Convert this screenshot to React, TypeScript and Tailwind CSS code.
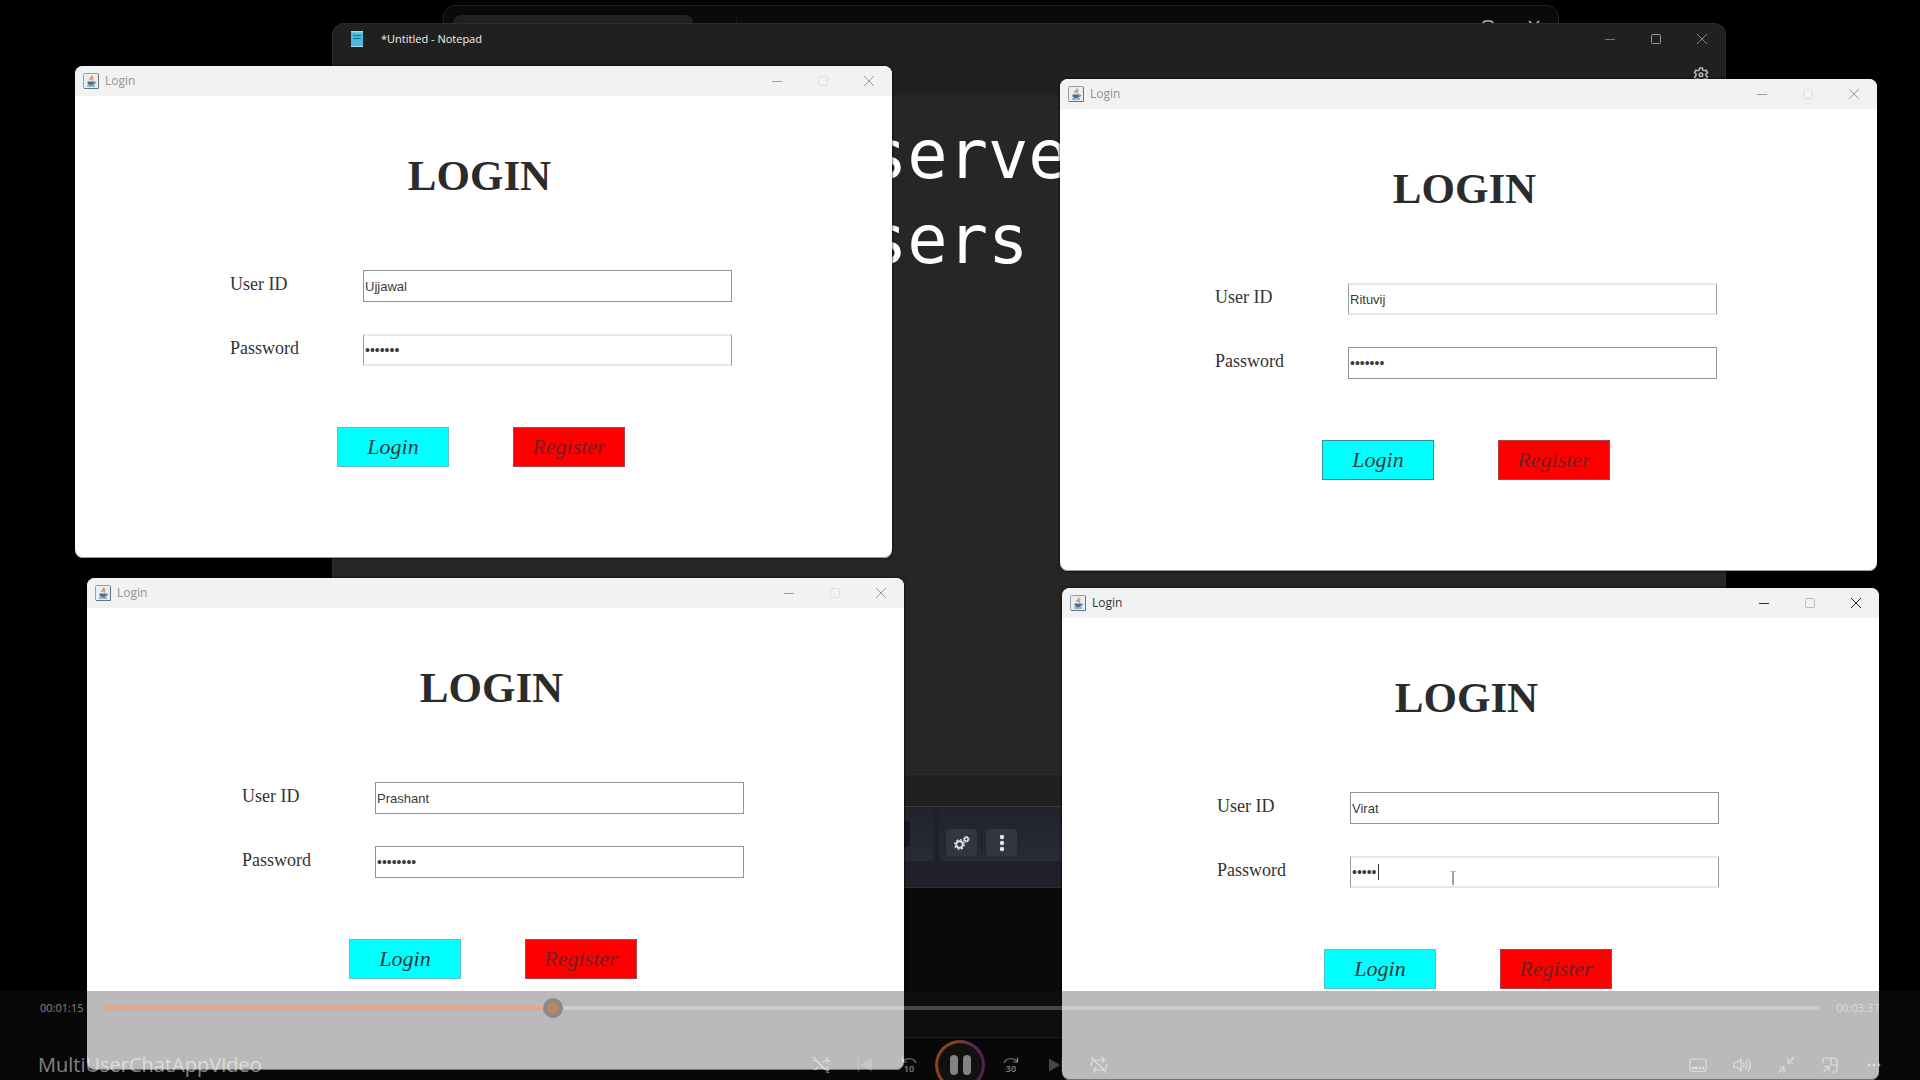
import React from "react";

type Tone = "solid" | "faint";

interface LoginWindowProps {
  id: string;
  place: string;
  user: string;
  password: string;
  active?: boolean;
  userTone?: Tone;
  passwordTone?: Tone;
  buttonBorder?: string;
  caret?: boolean;
}

const toneClass: Record<Tone, string> = {
  solid: "border-[#8c959c]",
  faint: "border-y-2 border-x-[#949ca3] border-y-[#e6e8ea]",
};

function MinimizeIcon() {
  return (
    <svg className="h-3 w-3" viewBox="0 0 12 12" fill="none" stroke="currentColor">
      <path d="M1 6.5h10" />
    </svg>
  );
}

function MaximizeIcon() {
  return (
    <svg className="h-3 w-3" viewBox="0 0 12 12" fill="none" stroke="currentColor">
      <rect x="1.5" y="1.5" width="9" height="9" rx="1" />
    </svg>
  );
}

function CloseIcon() {
  return (
    <svg className="h-3 w-3" viewBox="0 0 12 12" fill="none" stroke="currentColor">
      <path d="M1 1l10 10M11 1L1 11" />
    </svg>
  );
}

function JavaIcon() {
  return (
    <svg className="h-4 w-4" viewBox="0 0 16 16" fill="none">
      <rect x="0.5" y="0.5" width="15" height="15" rx="1" fill="#e9eef1" stroke="#8da0b0" />
      <path d="M1 15.5h14.5V1" stroke="#5d7789" />
      <path d="M9 2.5c.8 1.6-3 2.3-1.900 4.600M10.500 4.500c-2 .7-1.800 1.500-1 3" stroke="#dd7a34" strokeWidth="1.200" />
      <path d="M4.500 8.500h6.500v1.500c0 1.500-1 2-3 2s-3.500-.5-3.500-2z" fill="#4c708c" />
      <path d="M11 9c2.500-.6 2 1.800-.3 2M4 13h8" stroke="#4c708c" />
    </svg>
  );
}

function WindowControls({ closeClass, minClass, maxClass }: { closeClass: string; minClass: string; maxClass: string }) {
  return (
    <div className="ml-auto flex h-full">
      <button aria-label="Minimize" className={`flex w-[46px] items-center justify-center ${minClass}`}>
        <MinimizeIcon />
      </button>
      <button aria-label="Maximize" className={`flex w-[46px] items-center justify-center ${maxClass}`}>
        <MaximizeIcon />
      </button>
      <button aria-label="Close" className={`flex w-[46px] items-center justify-center ${closeClass}`}>
        <CloseIcon />
      </button>
    </div>
  );
}

function LoginWindow({
  id,
  place,
  user,
  password,
  active = false,
  userTone = "solid",
  passwordTone = "solid",
  buttonBorder = "border-[#5fc0c4]",
  caret = false,
}: LoginWindowProps) {
  const field = "h-8 w-full border bg-white pl-px font-['Liberation_Sans',sans-serif] text-[#3a3a3a] outline-none";
  return (
    <section
      className={`absolute w-[817px] overflow-hidden rounded-lg bg-white pb-[91px] shadow-[0_0_3px_#000,inset_0_-1px_0_#999] ${place}`}
    >
      <header className="flex h-[30px] items-center bg-[#f2f2f2] pl-2">
        <JavaIcon />
        <span className={`ml-1.5 font-['Open_Sans',sans-serif] text-xs ${active ? "text-[#333]" : "text-[#929292]"}`}>
          Login
        </span>
        <WindowControls
          minClass={active ? "text-[#333]" : "text-[#9c9c9c]"}
          maxClass={active ? "text-[#bbb]" : "text-[#dedede]"}
          closeClass={active ? "text-[#222]" : "text-[#9c9c9c]"}
        />
      </header>
      <form className="font-['Liberation_Serif',serif]" onSubmit={(e) => e.preventDefault()}>
        <h1 className="mt-14 pr-2 text-center text-[43px] leading-[48px] font-bold text-[#2b2b2b]">LOGIN</h1>
        <div className="mt-[70px] grid grid-cols-[133px_369px] gap-y-8 pl-[155px]">
          <label htmlFor={`${id}-user`} className="text-lg leading-7 text-[#333]">
            User ID
          </label>
          <input id={`${id}-user`} type="text" defaultValue={user} className={`${field} text-[13px] ${toneClass[userTone]}`} />
          <label htmlFor={`${id}-password`} className="text-lg leading-7 text-[#333]">
            Password
          </label>
          <div className="relative">
            <input
              id={`${id}-password`}
              type="password"
              defaultValue={password}
              className={`${field} text-sm ${toneClass[passwordTone]}`}
            />
            {caret && <span className="absolute top-2 left-7 h-4 w-px bg-[#333]" />}
          </div>
        </div>
        <div className="mt-[61px] flex gap-16 pl-[262px]">
          <button type="submit" className={`h-10 w-28 border bg-[#00ffff] pb-0.5 text-[22px] text-[#2b3a3a] italic ${buttonBorder}`}>
            Login
          </button>
          <button type="button" className="h-10 w-28 border border-[#b0404a] bg-[#ff0000] pb-0.5 text-[22px] text-[#6e2020] italic">
            Register
          </button>
        </div>
      </form>
    </section>
  );
}

function RearWindow() {
  return (
    <section className="absolute top-[5px] left-[443px] h-[1033px] w-[1116px] rounded-xl border border-[#222] bg-[#0a0a0a]">
      <div className="flex h-8 items-start pl-[9px]">
        <div className="mt-[9px] h-6 w-60 rounded-t-lg bg-[#212121]" />
        <div className="mt-2 ml-[43px] h-6 w-px bg-[#181818]" />
        <div className="mt-[14px] mr-[18px] ml-auto flex gap-[34px] text-[#bbb]">
          <svg className="h-3 w-3" viewBox="0 0 12 12" fill="none" stroke="currentColor" strokeWidth="1.500">
            <rect x="1" y="1" width="10" height="10" rx="3" />
          </svg>
          <svg className="h-3 w-3" viewBox="0 0 12 12" fill="none" stroke="currentColor" strokeWidth="1.500">
            <path d="M1 1l10 10M11 1L1 11" />
          </svg>
        </div>
      </div>
    </section>
  );
}

function DockedToolbar() {
  return (
    <section className="absolute top-[780px] left-[700px] flex h-[108px] w-[520px] items-start gap-[5px] border-b border-[#2b2c36] bg-[#1f202a] pt-[27px]">
      <div className="flex h-[54px] w-[234px] items-center justify-end rounded-b bg-linear-to-b from-[#212329] to-[#292b35] pr-6">
        <div className="h-[26px] w-12 rounded bg-[#171820]" />
      </div>
      <div className="flex h-[54px] flex-1 items-start gap-1 rounded-b bg-linear-to-b from-[#212329] to-[#292b35] pt-[22px] pl-[7px]">
        <button aria-label="Settings" className="flex h-[27px] w-[31px] items-center justify-center rounded bg-[#333640] text-[#e4e4e4]">
          <svg className="h-4 w-4" viewBox="0 0 16 16" fill="none" stroke="currentColor">
            <circle cx="5.500" cy="9.500" r="3.300" strokeWidth="2" />
            <circle cx="5.500" cy="9.500" r="4.800" strokeWidth="1.400" strokeDasharray="1.900 1.870" />
            <circle cx="12.300" cy="4.300" r="1.800" strokeWidth="1.400" />
            <circle cx="12.300" cy="4.300" r="2.800" strokeWidth="1.100" strokeDasharray="1.300 0.900" />
          </svg>
        </button>
        <div className="mt-1 h-5 w-px bg-[#1c1d25]" />
        <button aria-label="More options" className="flex h-[27px] w-[31px] items-center justify-center rounded bg-[#333640] text-[#e4e4e4]">
          <svg className="h-[18px] w-[18px]" viewBox="0 0 18 18" fill="currentColor">
            <circle cx="9" cy="3" r="2.200" />
            <circle cx="9" cy="9" r="2.200" />
            <circle cx="9" cy="15" r="2.200" />
          </svg>
        </button>
      </div>
    </section>
  );
}

function Notepad() {
  return (
    <section className="absolute top-[23px] left-[332px] flex h-[784px] w-[1394px] flex-col overflow-hidden rounded-t-xl border border-[#2c2c2c] border-b-[#3b3b3b] bg-[#262626]">
      <header className="h-[71px] bg-[#202020]">
        <div className="flex h-[30px] items-center pl-[18px]">
          <svg className="h-4 w-3" viewBox="0 0 12 16">
            <path d="M0 1h12v15H0z" fill="#4bb9d9" />
            <path d="M0 0h12v1.500H0zM0 15h12v1H0z" fill="#a7dcea" />
            <path d="M2 4.500h8M2 7.500h8" stroke="#1d718f" />
          </svg>
          <span className="ml-[18px] font-['Open_Sans',sans-serif] text-[11px] text-[#f2f2f2]">*Untitled - Notepad</span>
          <WindowControls minClass="text-[#777]" maxClass="text-[#999]" closeClass="text-[#888]" />
        </div>
        <div className="flex justify-end pt-[13px] pr-4">
          <svg className="h-4 w-4 text-[#bbb]" viewBox="0 0 16 16" fill="none" stroke="currentColor" strokeWidth="1.500">
            <path d="M6.700 1h2.600l.5 2 1.400.8 2-.6 1.300 2.300-1.500 1.400v1.700l1.500 1.400-1.300 2.300-2-.6-1.400.8-.5 2H6.700l-.5-2-1.400-.8-2 .6-1.300-2.300L3 8.600V6.900L1.500 5.500l1.300-2.300 2 .6L6.200 3z" />
            <circle cx="8" cy="7.800" r="1.800" />
          </svg>
        </div>
      </header>
      <div className="flex-1 pt-[18px] pl-[534px] font-['DejaVu_Sans_Mono',monospace] text-[67px] leading-[85px] text-white">
        <p>serve</p>
        <p>sers</p>
      </div>
      <footer className="h-8 border-t border-[#2b2b2b] bg-[#202020]" />
    </section>
  );
}

function IconButton({ label, children }: { label: string; children: React.ReactNode }) {
  return (
    <button aria-label={label} className="flex h-5 w-5 items-center justify-center">
      <svg className="h-[18px] w-[18px]" viewBox="0 0 18 18" fill="none" stroke="currentColor" strokeWidth="1.200">
        {children}
      </svg>
    </button>
  );
}

function SkipIcon({ amount, flip = false }: { amount: string; flip?: boolean }) {
  return (
    <>
      <path d={flip ? "M2 7C4 1.500 13 1.500 15.500 6M15.500 1.500V6H11" : "M16 7C14 1.500 5 1.500 2.500 6M2.500 1.500V6H7"} />
      <text
        x="9"
        y="16"
        textAnchor="middle"
        fill="currentColor"
        stroke="none"
        className="font-['Open_Sans',sans-serif] text-[9px] font-semibold"
      >
        {amount}
      </text>
    </>
  );
}

function Player() {
  return (
    <section className="absolute inset-x-0 bottom-0 h-[89px] bg-[#1a1a1a]/30 font-['Open_Sans',sans-serif] text-white/50">
      <div className="flex h-[34px] items-center pr-[38px] pl-10 text-[11px]">
        <span className="w-[61px]">00:01:15</span>
        <input
          type="range"
          aria-label="Seek"
          min={0}
          max={1000}
          defaultValue={260}
          className="h-5 flex-1 appearance-none bg-transparent [&::-webkit-slider-runnable-track]:h-1 [&::-webkit-slider-runnable-track]:rounded-full [&::-webkit-slider-runnable-track]:bg-[linear-gradient(to_right,#e9a883_26%,#ffffff3b_26%)] [&::-webkit-slider-thumb]:-mt-2 [&::-webkit-slider-thumb]:h-5 [&::-webkit-slider-thumb]:w-5 [&::-webkit-slider-thumb]:appearance-none [&::-webkit-slider-thumb]:rounded-full [&::-webkit-slider-thumb]:bg-[radial-gradient(circle,#bf845f_5px,#8a8a8a_6px)]"
        />
        <span className="ml-4 w-[46px] text-white/45">00:03:37</span>
      </div>
      <div className="mt-[15px] grid h-[50px] grid-cols-[1fr_auto_1fr] items-center px-[38px]">
        <span className="text-xl leading-6">MultiUserChatAppVideo</span>
        <div className="flex items-center">
          <div className="flex gap-6 pr-4">
            <IconButton label="Shuffle off">
              <path d="M1 4.500h3l8.500 9H17M1 13.500h3l2.500-2.700M10 7l2.500-2.500H17M14 1.500l3 3-3 3M14 10.500l3 3-3 3M1 1l16 16" />
            </IconButton>
            <IconButton label="Previous">
              <path d="M2.500 2v14" opacity="0.400" />
              <path d="M16 2.500v13L5 9z" fill="currentColor" stroke="none" opacity="0.400" />
            </IconButton>
            <IconButton label="Back 10 seconds">
              <SkipIcon amount="10" />
            </IconButton>
          </div>
          <button
            aria-label="Pause"
            className="flex h-[50px] w-[50px] items-center justify-center rounded-full bg-[linear-gradient(90deg,#8a4616,#8a4616_35%,#743040_60%,#4f2058)] p-[3px]"
          >
            <span className="flex h-full w-full items-center justify-center gap-[5px] rounded-full bg-[#111]">
              <span className="h-5 w-2 rounded-sm bg-[#838383]" />
              <span className="h-5 w-2 rounded-sm bg-[#838383]" />
            </span>
          </button>
          <div className="flex gap-6 pl-4">
            <IconButton label="Forward 30 seconds">
              <SkipIcon amount="30" flip />
            </IconButton>
            <IconButton label="Next">
              <path d="M3 2.500v13L14 9z" fill="currentColor" stroke="none" opacity="0.500" />
              <path d="M16 2v14" opacity="0.300" />
            </IconButton>
            <IconButton label="Repeat off">
              <path d="M1.500 10V7.500c0-2 1-3.500 3.500-3.500h9M11.500 1l3 3-3 3M16.500 8v2.500c0 2-1 3.500-3.500 3.500H4M6.500 11l-3 3 3 3M1 1l16 16" />
            </IconButton>
          </div>
        </div>
        <div className="-mr-0.5 flex justify-end gap-6">
          <IconButton label="Subtitles">
            <rect x="1" y="3" width="16" height="12.500" rx="2" />
            <path d="M3 12h6M10 12h2M13 12h2" strokeWidth="2.500" />
          </IconButton>
          <IconButton label="Volume">
            <path d="M1 6.500h3L8 3v12l-4-3.500H1zM10 6.500c1.300 1.500 1.300 3.500 0 5M12.300 4.500c2.300 2.700 2.300 6.300 0 9M14.600 2.500c3.200 4 3.200 9 0 13" />
          </IconButton>
          <IconButton label="Exit full screen">
            <path d="M17 1l-6 6M11 2v5h5M1 17l6-6M2 11h5v5" />
          </IconButton>
          <IconButton label="Mini player">
            <path d="M2 7V4c0-1 .8-2 2-2h10c1.200 0 2 1 2 2v10c0 1.200-.8 2-2 2h-3M10 2v7h6M2 16.500l6-6M3 10.500h5v5" />
          </IconButton>
          <IconButton label="More">
            <g fill="currentColor" stroke="none">
              <circle cx="4" cy="9" r="1.400" />
              <circle cx="9" cy="9" r="1.400" />
              <circle cx="14" cy="9" r="1.400" />
            </g>
          </IconButton>
        </div>
      </div>
    </section>
  );
}

export default function App() {
  return (
    <main className="relative h-screen overflow-hidden bg-black">
      <RearWindow />
      <DockedToolbar />
      <Notepad />
      <LoginWindow id="ujjawal" place="top-[66px] left-[75px]" user="Ujjawal" password="ujjawal" passwordTone="faint" />
      <LoginWindow
        id="rituvij"
        place="top-[79px] left-[1060px]"
        user="Rituvij"
        password="rituvij"
        userTone="faint"
        buttonBorder="border-[#3a8f98]"
      />
      <LoginWindow id="prashant" place="top-[578px] left-[87px]" user="Prashant" password="prashant" />
      <LoginWindow
        id="virat"
        place="top-[588px] left-[1062px]"
        user="Virat"
        password="virat"
        active
        passwordTone="faint"
        caret
      />
      <svg className="absolute top-[870px] left-[1448px] h-4 w-[10px]" viewBox="0 0 10 16" fill="none">
        <path d="M2 1.500h6" stroke="#bbb" />
        <path d="M5 2v13" stroke="#444" />
      </svg>
      <Player />
    </main>
  );
}
